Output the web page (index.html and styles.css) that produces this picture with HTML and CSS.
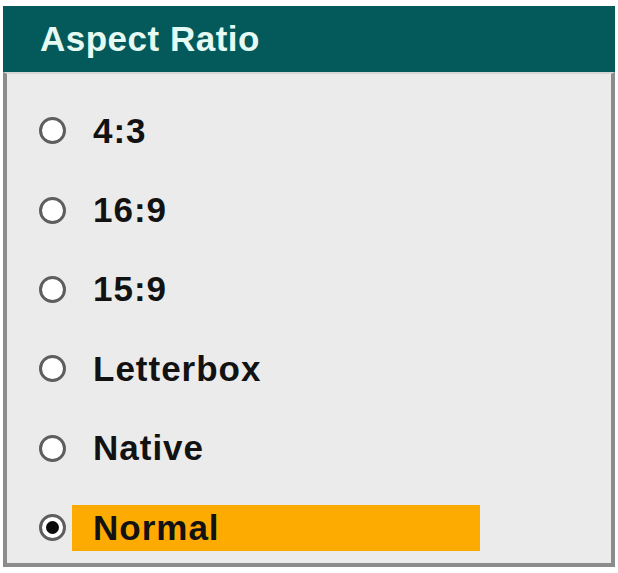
FILE: index.html
```html
<!DOCTYPE html>
<html>
<head>
<meta charset="utf-8">
<link rel="stylesheet" href="styles.css">
</head>
<body>
<div class="panel">
  <div class="header">Aspect Ratio</div>
  <div class="list">
    <div class="row"><span class="radio"></span><span class="label">4:3</span></div>
    <div class="row"><span class="radio"></span><span class="label">16:9</span></div>
    <div class="row"><span class="radio"></span><span class="label">15:9</span></div>
    <div class="row"><span class="radio"></span><span class="label">Letterbox</span></div>
    <div class="row"><span class="radio"></span><span class="label">Native</span></div>
    <div class="row"><span class="radio checked"></span><span class="label selected">Normal</span></div>
  </div>
</div>
</body>
</html>
```

FILE: styles.css
```css
html, body {
  margin: 0;
  padding: 0;
  background: #ffffff;
}
body {
  padding: 6px 0 0 3px;
  font-family: "Liberation Sans", Arial, sans-serif;
}
.panel {
  width: 612px;
}
.header {
  height: 66px;
  background: #04595b;
  color: #e4faf3;
  font-size: 35px;
  font-weight: bold;
  letter-spacing: 0.5px;
  padding-left: 37px;
  display: flex;
  align-items: center;
  box-sizing: border-box;
}
.list {
  background: #ebebeb;
  border: 4px solid #8c8c8c;
  border-top: 2px solid #d6d6d6;
  padding-top: 17px;
  height: 495px;
  box-sizing: border-box;
}
.row {
  height: 79.4px;
  display: flex;
  align-items: center;
}
.radio {
  width: 27px;
  height: 27px;
  margin-left: 32px;
  box-sizing: border-box;
  border-radius: 50%;
  border: 3px solid #5e5e5e;
  background: #ffffff;
  flex: none;
  display: flex;
  align-items: center;
  justify-content: center;
}
.radio.checked::after {
  content: "";
  width: 13px;
  height: 13px;
  border-radius: 50%;
  background: #0a0a0a;
}
.label {
  margin-left: 6px;
  padding-left: 21px;
  width: 408px;
  height: 46px;
  box-sizing: border-box;
  display: flex;
  align-items: center;
  font-size: 35px;
  font-weight: bold;
  letter-spacing: 1px;
  color: #121212;
}
.label.selected {
  background: #fdab00;
}
```
